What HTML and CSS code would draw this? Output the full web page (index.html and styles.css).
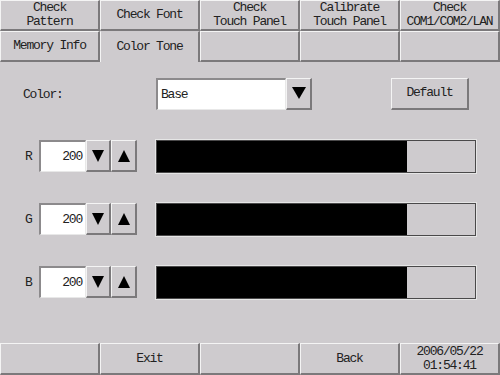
FILE: index.html
```html
<!DOCTYPE html>
<html lang="en">
<head>
    <meta charset="UTF-8">
    <title>Color Tone</title>
    <link rel="stylesheet" href="styles.css">
</head>
<body>
    <div class="screen">
        <div class="tabs">
            <div class="btn">Check<br>Pattern</div>
            <div class="btn">Check Font</div>
            <div class="btn">Check<br>Touch Panel</div>
            <div class="btn">Calibrate<br>Touch Panel</div>
            <div class="btn">Check<br>COM1/COM2/LAN</div>
            <div class="btn">Memory Info</div>
            <div class="btn tab-active">Color Tone</div>
            <div class="btn"></div>
            <div class="btn"></div>
            <div class="btn"></div>
        </div>

        <div class="main">
            <div class="row color-row">
                <div class="label">Color:</div>
                <div class="select">
                    <div class="field select-text">Base</div>
                    <div class="btn arrow">
                        <svg width="14" height="12" viewBox="0 0 14 12"><polygon points="0,0 14,0 7,12" fill="#000"/></svg>
                    </div>
                </div>
                <div class="btn default-btn">Default</div>
            </div>

            <div class="row rgb-row">
                <div class="letter">R</div>
                <div class="field num">200</div>
                <div class="btn arrow step">
                    <svg width="12" height="12" viewBox="0 0 12 12"><polygon points="0,0 12,0 6,12" fill="#000"/></svg>
                </div>
                <div class="btn arrow step">
                    <svg width="12" height="12" viewBox="0 0 12 12"><polygon points="0,12 12,12 6,0" fill="#000"/></svg>
                </div>
                <div class="bar"><div class="bar-fill" style="width: 78.5%"></div></div>
            </div>

            <div class="row rgb-row">
                <div class="letter">G</div>
                <div class="field num">200</div>
                <div class="btn arrow step">
                    <svg width="12" height="12" viewBox="0 0 12 12"><polygon points="0,0 12,0 6,12" fill="#000"/></svg>
                </div>
                <div class="btn arrow step">
                    <svg width="12" height="12" viewBox="0 0 12 12"><polygon points="0,12 12,12 6,0" fill="#000"/></svg>
                </div>
                <div class="bar"><div class="bar-fill" style="width: 78.5%"></div></div>
            </div>

            <div class="row rgb-row">
                <div class="letter">B</div>
                <div class="field num">200</div>
                <div class="btn arrow step">
                    <svg width="12" height="12" viewBox="0 0 12 12"><polygon points="0,0 12,0 6,12" fill="#000"/></svg>
                </div>
                <div class="btn arrow step">
                    <svg width="12" height="12" viewBox="0 0 12 12"><polygon points="0,12 12,12 6,0" fill="#000"/></svg>
                </div>
                <div class="bar"><div class="bar-fill" style="width: 78.5%"></div></div>
            </div>
        </div>

        <div class="footer">
            <div class="btn"></div>
            <div class="btn">Exit</div>
            <div class="btn"></div>
            <div class="btn">Back</div>
            <div class="btn clock">2006/05/22<br>01:54:41</div>
        </div>
    </div>
</body>
</html>
```

FILE: styles.css
```css
body {
    margin: 0;
    padding: 0;
    background-color: #cecbce;
    font-family: "Liberation Mono", "DejaVu Sans Mono", monospace;
    font-size: 13px;
    letter-spacing: -1.2px;
    color: #222;
}
.screen {
    width: 500px;
    height: 375px;
    display: flex;
    flex-direction: column;
    overflow: hidden;
}

/* raised button look */
.btn {
    box-sizing: border-box;
    background-color: #cecbce;
    border-top: 1px solid #f4f4f4;
    border-left: 1px solid #f4f4f4;
    border-right: 2px solid #7b797b;
    border-bottom: 2px solid #7b797b;
    display: flex;
    align-items: center;
    justify-content: center;
    text-align: center;
    line-height: 14px;
}

.tabs {
    display: grid;
    grid-template-columns: repeat(5, 100px);
    grid-template-rows: 31px 31px;
}
.tab-active {
    border-top: 1px solid #cecbce;
    border-bottom: none;
}

/* main panel */
.main {
    flex: 1;
    padding: 16px 0 0 23px;
    display: flex;
    flex-direction: column;
    gap: 31px;
}
.row {
    display: flex;
    align-items: center;
    height: 31px;
}
.label {
    width: 133px;
    padding-top: 2px;
}
.select {
    display: flex;
    width: 156px;
    height: 32px;
}
.field {
    box-sizing: border-box;
    background-color: #ffffff;
    border-top: 2px solid #8c8a8c;
    border-left: 2px solid #8c8a8c;
    border-right: 1px solid #e8e8e8;
    border-bottom: 1px solid #e8e8e8;
    height: 100%;
    display: flex;
    align-items: center;
}
.select-text {
    flex: 1;
    padding-left: 3px;
}
.arrow {
    width: 26px;
    height: 100%;
}
.default-btn {
    margin-left: 79px;
    width: 78px;
    height: 32px;
}

.rgb-row {
    height: 32px;
}
.letter {
    width: 16px;
    padding-left: 2px;
    box-sizing: border-box;
}
.num {
    width: 47px;
    justify-content: flex-end;
    padding-right: 3px;
}
.step {
    width: 25px;
}
.step + .step {
    width: 26px;
}
.bar {
    box-sizing: border-box;
    margin-left: 19px;
    width: 320px;
    height: 33px;
    border: 1px solid #4a494a;
    box-shadow: 0 0 0 1px #e6e6e6;
    background-color: #cecbce;
    display: flex;
}
.bar-fill {
    background-color: #000000;
    height: 100%;
}

.footer {
    display: grid;
    grid-template-columns: repeat(5, 100px);
    height: 32px;
}
```
